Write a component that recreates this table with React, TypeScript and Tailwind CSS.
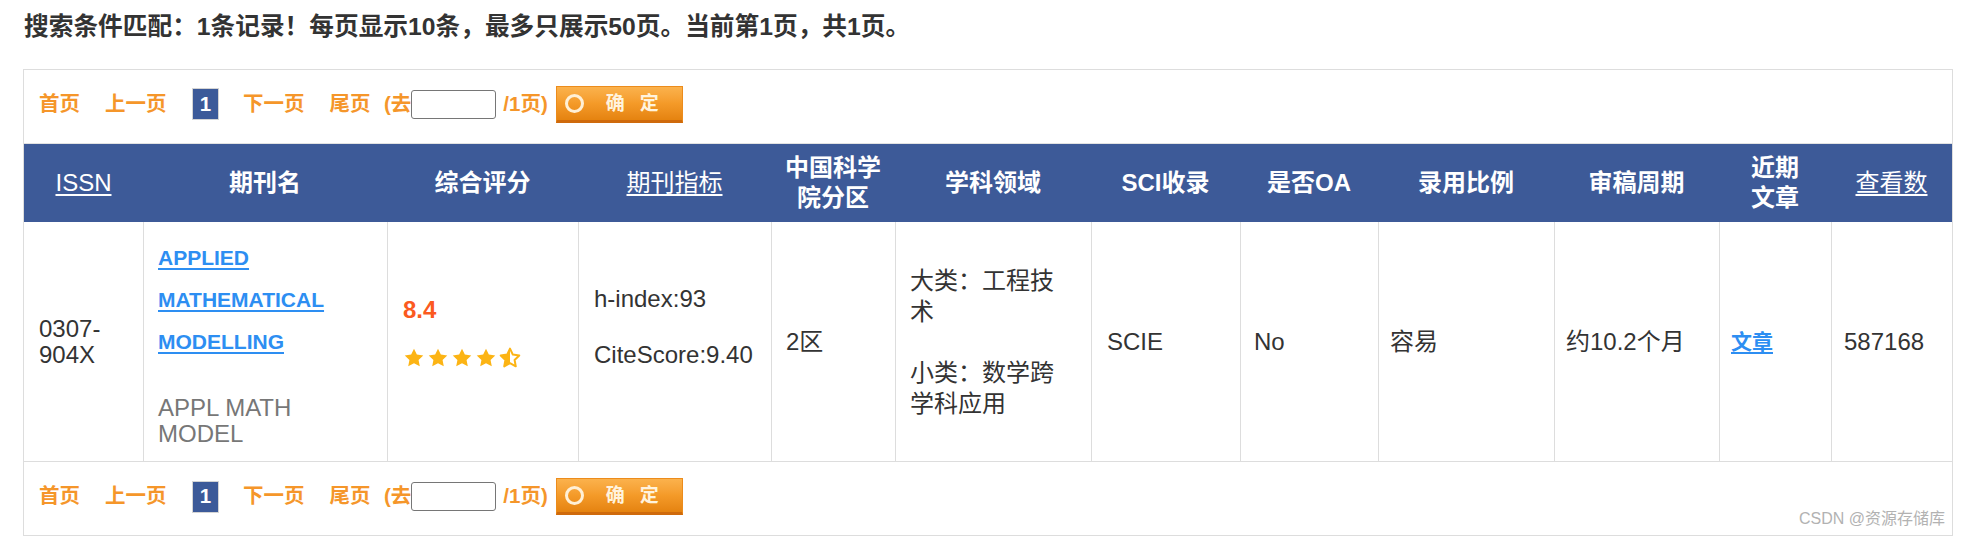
import React from "react";

const STAR =
  "M12 1.8l3.1 6.5 7 .9-5.1 4.9 1.3 7L12 17.7 5.7 21.1l1.3-7L1.9 9.2l7-.9z";

function Star({ half = false }: { half?: boolean }) {
  return (
    <svg width="22" height="22" viewBox="0 0 24 24" className="shrink-0">
      {half ? (
        <>
          <defs>
            <linearGradient id="halfstar" x1="0" x2="1" y1="0" y2="0">
              <stop offset="50%" stopColor="#fcb414" />
              <stop offset="50%" stopColor="#ffffff" />
            </linearGradient>
          </defs>
          <path d={STAR} fill="url(#halfstar)" stroke="#fcb414" strokeWidth="2.2" strokeLinejoin="round" />
        </>
      ) : (
        <path d={STAR} fill="#fcb414" />
      )}
    </svg>
  );
}

function Pager({ extra }: { extra: string }) {
  return (
    <div
      className={`flex items-center pl-[15px] text-[20.5px] font-bold leading-none text-[#f5962a] ${extra}`}
    >
      <a className="cursor-pointer">首页</a>
      <a className="ml-[25px] cursor-pointer">上一页</a>
      <span className="ml-[25.5px] flex h-[32px] w-[27px] items-center justify-center border border-[#d4d4d4] bg-[#3c5a99] text-white">
        1
      </span>
      <a className="ml-[24px] cursor-pointer">下一页</a>
      <a className="ml-[25px] cursor-pointer">尾页</a>
      <span className="ml-[13.5px]">(去</span>
      <input className="h-[29px] w-[85px] rounded-[3px] border border-[#767676] bg-white outline-none" />
      <span className="ml-[7px]">/1页)</span>
      <button className="ml-[8px] flex h-[37px] w-[127px] items-center border border-[#ec8c1c] border-b-[3px] border-b-[#cf6a0c] bg-gradient-to-b from-[#fbb24c] via-[#f49a28] to-[#e5830f] pl-[8px] text-[19px] font-bold text-[#fff3de]">
        <span className="h-[19px] w-[19px] rounded-full border-[3px] border-[#fff0d6]" />
        <span className="ml-[22px]">确</span>
        <span className="ml-[15px]">定</span>
      </button>
    </div>
  );
}

export default function App() {
  return (
    <div className="min-h-[542px] bg-white font-['Liberation_Sans','Noto_Sans_CJK_SC',sans-serif] text-[#333]">
      <div className="h-[69px] pl-[24px] pt-[11px] text-[24.7px] font-bold leading-[32px] text-[#333]">
        搜索条件匹配：1条记录！每页显示10条，最多只展示50页。当前第1页，共1页。
      </div>

      <div className="relative ml-[23px] w-[1930px] border border-[#dddddd]">
        <Pager extra="h-[74px] pb-[5px] border-b border-[#e2e2e2]" />

        <div className="grid grid-cols-[119px_244px_191px_193px_124px_196px_149px_138px_176px_165px_112px_121px]">
          {/* header */}
          <div className="col-span-12 grid h-[78px] grid-cols-[119px_244px_191px_193px_124px_196px_149px_138px_176px_165px_112px_121px] bg-[#3d5a98] text-[24px] text-white">
            <div className="flex items-center justify-center">
              <a className="cursor-pointer underline underline-offset-[3px]">ISSN</a>
            </div>
            <div className="flex items-center justify-center font-bold">期刊名</div>
            <div className="flex items-center justify-center font-bold">综合评分</div>
            <div className="flex items-center justify-center">
              <a className="cursor-pointer underline underline-offset-[3px]">期刊指标</a>
            </div>
            <div className="flex items-center justify-center text-center font-bold leading-[30px]">
              中国科学
              <br />
              院分区
            </div>
            <div className="flex items-center justify-center font-bold">学科领域</div>
            <div className="flex items-center justify-center font-bold">SCI收录</div>
            <div className="flex items-center justify-center font-bold">是否OA</div>
            <div className="flex items-center justify-center font-bold">录用比例</div>
            <div className="flex items-center justify-center font-bold">审稿周期</div>
            <div className="flex items-center justify-center text-center font-bold leading-[30px]">
              近期
              <br />
              文章
            </div>
            <div className="flex items-center justify-center">
              <a className="cursor-pointer underline underline-offset-[3px]">查看数</a>
            </div>
          </div>

          {/* data row */}
          <div className="col-span-12 grid h-[240px] grid-cols-[119px_244px_191px_193px_124px_196px_149px_138px_176px_165px_112px_121px] border-b border-[#dddddd] text-[24px]">
            <div className="flex flex-col justify-center px-[15px] leading-[26px]">
              0307-
              <br />
              904X
            </div>
            <div className="flex flex-col justify-center border-l border-[#dddddd] px-[14px]">
              <div className="text-[21px] font-bold leading-[42px]">
                <a className="cursor-pointer text-[#2d8ef2] underline decoration-[2px] underline-offset-[3px]">
                  APPLIED MATHEMATICAL MODELLING
                </a>
              </div>
              <div className="mt-[32px] leading-[26px] text-[#777]">APPL MATH MODEL</div>
            </div>
            <div className="flex flex-col justify-center border-l border-[#dddddd] px-[15px]">
              <div className="font-bold leading-[26px] text-[#fb5a1f]">8.4</div>
              <div className="mb-[17px] mt-[23px] flex h-[24px] items-center gap-[2px]">
                <Star />
                <Star />
                <Star />
                <Star />
                <Star half />
              </div>
            </div>
            <div className="flex flex-col justify-center border-l border-[#dddddd] px-[15px] leading-[26px]">
              <p className="mb-[30px]">h-index:93</p>
              <p className="mb-[30px]">CiteScore:9.40</p>
            </div>
            <div className="flex flex-col justify-center border-l border-[#dddddd] px-[14px]">2区</div>
            <div className="flex flex-col justify-center border-l border-[#dddddd] px-[14px] leading-[31px]">
              <p className="mb-[30px]">
                大类：工程技
                <br />
                术
              </p>
              <p>
                小类：数学跨
                <br />
                学科应用
              </p>
            </div>
            <div className="flex flex-col justify-center border-l border-[#dddddd] px-[15px]">SCIE</div>
            <div className="flex flex-col justify-center border-l border-[#dddddd] px-[13px]">No</div>
            <div className="flex flex-col justify-center border-l border-[#dddddd] px-[11px]">容易</div>
            <div className="flex flex-col justify-center border-l border-[#dddddd] px-[11px]">约10.2个月</div>
            <div className="flex flex-col justify-center border-l border-[#dddddd] px-[11px]">
              <a className="cursor-pointer text-[21px] font-bold text-[#2d8ef2] underline decoration-[2px] underline-offset-[3px]">
                文章
              </a>
            </div>
            <div className="flex flex-col justify-center border-l border-[#dddddd] px-[12px]">587168</div>
          </div>
        </div>

        <Pager extra="h-[73px] pb-[4px]" />

        <div className="pointer-events-none absolute bottom-[6px] right-[7px] text-[16px] leading-[20px] text-[#b2b2b2]">
          CSDN @资源存储库
        </div>
      </div>
    </div>
  );
}
